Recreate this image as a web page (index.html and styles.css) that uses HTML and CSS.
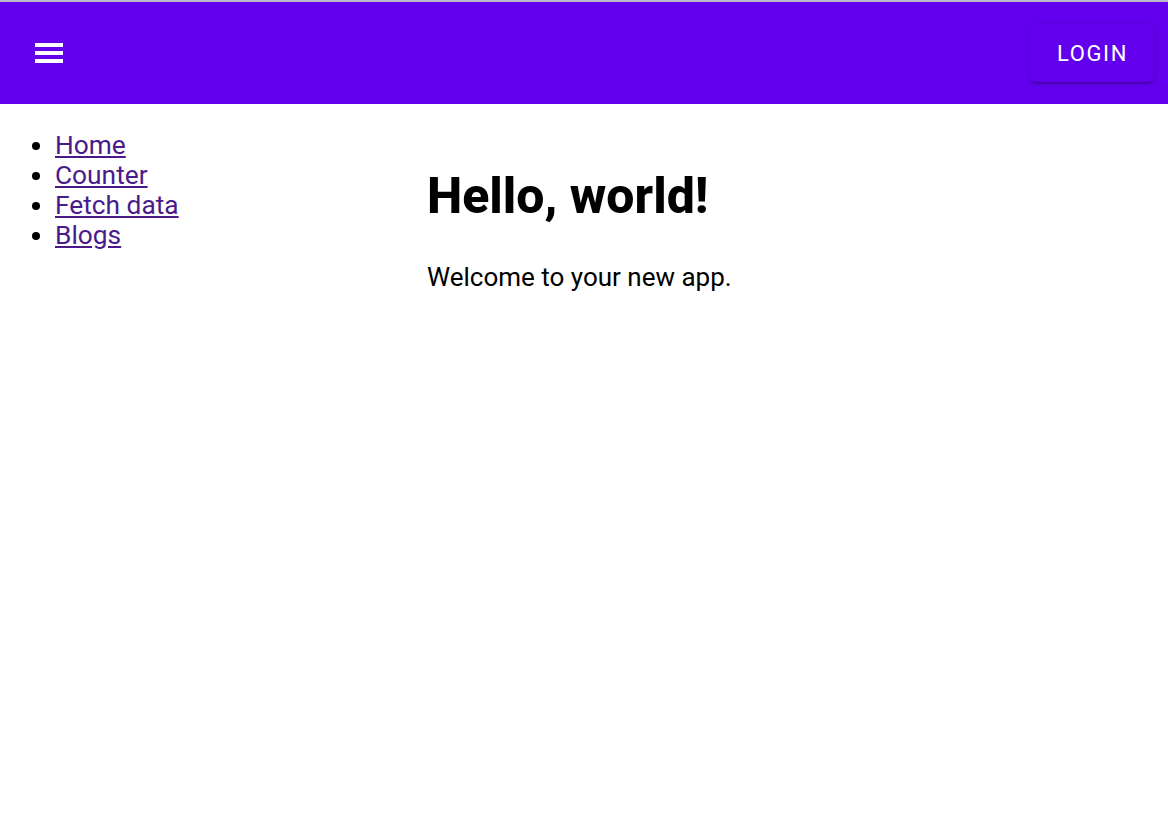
FILE: index.html
```html
<!DOCTYPE html>
<html lang="en">
<head>
<meta charset="utf-8">
<title>App</title>
<link rel="stylesheet" href="styles.css">
</head>
<body>
<div class="topline"></div>
<header class="appbar">
  <button class="menu-btn" aria-label="menu">
    <svg width="28" height="20" viewBox="0 0 28 20"><rect x="0" y="0" width="28" height="4" fill="#fff"/><rect x="0" y="8" width="28" height="4" fill="#fff"/><rect x="0" y="16" width="28" height="4" fill="#fff"/></svg>
  </button>
  <button class="login-btn">LOGIN</button>
</header>
<div class="layout">
  <nav class="sidebar">
    <ul class="nav-list">
      <li><a href="#">Home</a></li>
      <li><a href="#">Counter</a></li>
      <li><a href="#">Fetch data</a></li>
      <li><a href="#">Blogs</a></li>
    </ul>
  </nav>
  <main class="content">
    <h1 class="title">Hello, world!</h1>
    <p class="lead">Welcome to your new app.</p>
  </main>
</div>
</body>
</html>
```
FILE: styles.css
```css
html, body {
  margin: 0;
  padding: 0;
  background: #fff;
}
body {
  font-family: Roboto, "Liberation Sans", sans-serif;
  font-size: 24px;
  color: #000;
}
.topline {
  height: 2px;
  background: #bdb8c8;
}
.appbar {
  height: 102px;
  background: #6200ee;
  display: flex;
  align-items: center;
  justify-content: space-between;
  padding: 0 14px 0 35px;
}
.menu-btn {
  background: none;
  border: 0;
  padding: 0;
  margin: 0;
  display: flex;
  cursor: pointer;
}
.login-btn {
  width: 124px;
  height: 58px;
  background: #6200ee;
  color: #fff;
  border: 0;
  border-radius: 6px;
  font-family: Roboto, sans-serif;
  font-weight: 400;
  font-size: 22px;
  letter-spacing: 1.6px;
  padding: 0 0 0 1px;
  box-shadow: 0 3px 1px -2px rgba(0,0,0,0.2), 0 2px 3px 0 rgba(0,0,0,0.14), 0 1px 7px 0 rgba(0,0,0,0.12);
  cursor: pointer;
}
.layout {
  display: flex;
}
.sidebar {
  width: 427px;
  flex: none;
}
.nav-list {
  margin: 26px 0 0 0;
  padding-left: 55px;
  font-size: 26.3px;
  line-height: 30px;
}
.nav-list a {
  color: #4a1a8b;
}
.content {
  flex: 1;
}
.title {
  font-size: 50px;
  font-weight: 800;
  margin: 64px 0 0 0;
  line-height: 56px;
}
.lead {
  font-size: 26px;
  margin: 38px 0 0 0;
  line-height: 30px;
}
```
